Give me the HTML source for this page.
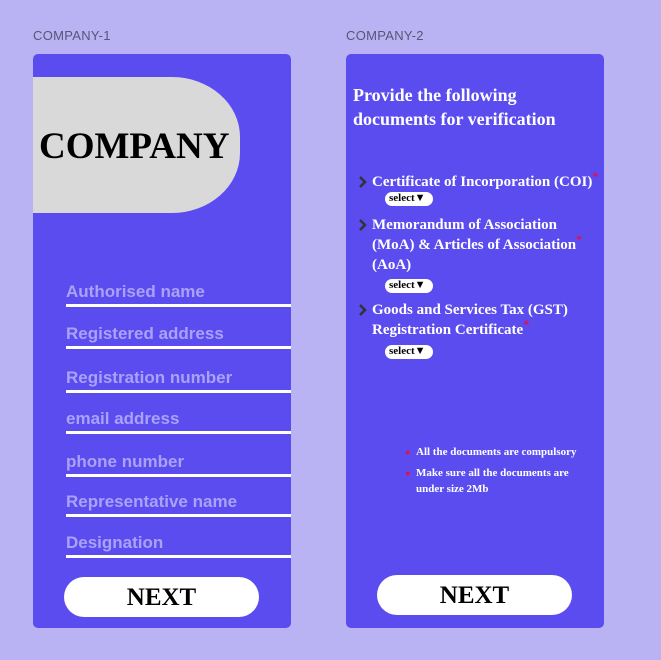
<!DOCTYPE html>
<html><head><style>
body{margin:0;width:661px;height:660px;background:#b9b2f3;position:relative;overflow:hidden;font-family:"Liberation Sans",sans-serif}
.lbl{position:absolute;top:28px;font-size:13px;color:#5a5575;letter-spacing:.3px}
.card{position:absolute;top:54px;width:258px;height:574px;background:#5b4cf0;border-radius:5px}
.gray{position:absolute;left:33px;top:77px;width:207px;height:136px;background:#d9d9d9;border-radius:0 68px 68px 0 / 0 60px 60px 0}
.gray span{position:absolute;left:6px;top:48px;font-family:"Liberation Serif",serif;font-weight:bold;font-size:37px;color:#000}
.f{position:absolute;left:66px;width:225px;border-bottom:3px solid #fff;color:#aaa2f8;font-weight:bold;font-size:17px;height:22px}
.btn{position:absolute;width:195px;height:40px;background:#fff;border-radius:20px;text-align:center;font-family:"Liberation Serif",serif;font-weight:bold;font-size:25px;line-height:42px;color:#000}
.s{font-family:"Liberation Serif",serif;color:#fff;font-weight:bold;position:absolute}
.it{font-size:15px;line-height:20px;left:372px;width:240px;white-space:nowrap}
.ar{position:absolute;left:-13px;top:4px;width:8px;height:12px}
.st{color:#e0104a;font-size:12px;vertical-align:top;position:relative;top:-6px}
.sel{position:absolute;left:385px;width:48px;height:14px;background:#fff;border-radius:7px;font-family:"Liberation Serif",serif;font-weight:bold;font-size:11px;color:#000;line-height:13px;padding-left:4px;box-sizing:border-box}
.n{position:absolute;font-size:11px;left:416px;line-height:16px}
.d{position:absolute;left:-11px;color:#e0104a;font-size:9px}
</style></head><body>
<div class="lbl" style="left:33px">COMPANY-1</div>
<div class="lbl" style="left:346px">COMPANY-2</div>
<div class="card" style="left:33px"></div>
<div class="card" style="left:346px"></div>
<div class="gray"><span>COMPANY</span></div>
<div class="f" style="top:282px">Authorised name</div>
<div class="f" style="top:324px">Registered address</div>
<div class="f" style="top:368px">Registration number</div>
<div class="f" style="top:409px">email address</div>
<div class="f" style="top:452px">phone number</div>
<div class="f" style="top:492px">Representative name</div>
<div class="f" style="top:533px">Designation</div>
<div class="btn" style="left:64px;top:577px">NEXT</div>
<div class="s" style="left:353px;top:83px;font-size:18px;line-height:24px;font-weight:bold;width:240px">Provide the following documents for verification</div>
<div class="s it" style="top:172px"><svg class="ar" viewBox="0 0 8 12"><path d="M1 1 L6 6 L1 11" stroke="#333" stroke-width="2.5" fill="none"/></svg>Certificate of Incorporation (COI)<span class="st">*</span></div>
<div class="sel" style="top:192px">select▼</div>
<div class="s it" style="top:215px"><svg class="ar" viewBox="0 0 8 12"><path d="M1 1 L6 6 L1 11" stroke="#333" stroke-width="2.5" fill="none"/></svg>Memorandum of Association<br>(MoA) &amp; Articles of Association<span class="st">*</span><br>(AoA)</div>
<div class="sel" style="top:279px">select▼</div>
<div class="s it" style="top:300px"><svg class="ar" viewBox="0 0 8 12"><path d="M1 1 L6 6 L1 11" stroke="#333" stroke-width="2.5" fill="none"/></svg>Goods and Services Tax (GST)<br>Registration Certificate<span class="st">*</span></div>
<div class="sel" style="top:345px">select▼</div>
<div class="s n" style="top:444px;width:200px"><span class="d">●</span>All the documents are compulsory</div>
<div class="s n" style="top:465px;width:180px"><span class="d">●</span>Make sure all the documents are under size 2Mb</div>
<div class="btn" style="left:377px;top:575px">NEXT</div>
</body></html>
